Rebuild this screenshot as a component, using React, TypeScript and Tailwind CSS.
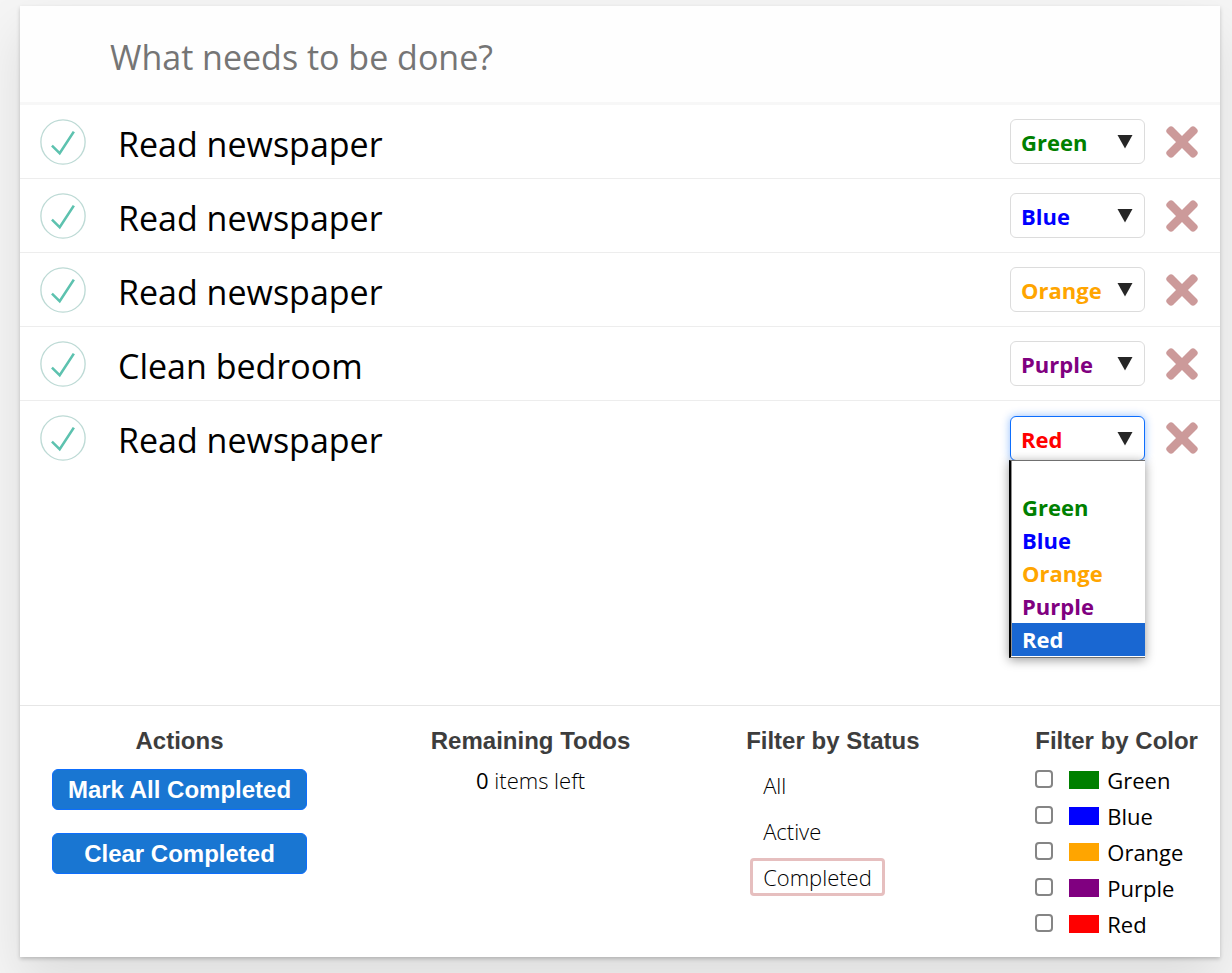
import { useState } from "react";
import { FaTimes } from "react-icons/fa";

type Color = "Green" | "Blue" | "Orange" | "Purple" | "Red";
type Todo = { id: number; text: string; color: Color };

const colors: Color[] = ["Green", "Blue", "Orange", "Purple", "Red"];

const textColor: Record<Color, string> = {
  Green: "text-[#008000]",
  Blue: "text-[#0000ff]",
  Orange: "text-[#ffa500]",
  Purple: "text-[#800080]",
  Red: "text-[#ff0000]",
};

const swatchColor: Record<Color, string> = {
  Green: "bg-[#008000]",
  Blue: "bg-[#0000ff]",
  Orange: "bg-[#ffa500]",
  Purple: "bg-[#800080]",
  Red: "bg-[#ff0000]",
};

const initialTodos: Todo[] = [
  { id: 1, text: "Read newspaper", color: "Green" },
  { id: 2, text: "Read newspaper", color: "Blue" },
  { id: 3, text: "Read newspaper", color: "Orange" },
  { id: 4, text: "Clean bedroom", color: "Purple" },
  { id: 5, text: "Read newspaper", color: "Red" },
];

function CheckMark() {
  return (
    <svg className="size-[46px]" viewBox="-2 -2 104 104" aria-hidden="true">
      <circle cx="50" cy="50" r="50" fill="none" stroke="#bddad5" strokeWidth="3" />
      <path fill="#5dc2af" d="M72 25L42 71 27 56l-4 4 20 20 34-52z" />
    </svg>
  );
}

function ColorSelect({ value, open, onChange }: { value: Color; open: boolean; onChange: (c: Color) => void }) {
  return (
    <div className="relative w-[135px]">
      <select
        aria-label="Color"
        value={value}
        onChange={(e) => onChange(e.target.value as Color)}
        className={`block h-[45px] w-full appearance-none rounded-[6px] border bg-white pt-0.5 pl-2.5 text-[22px] font-bold outline-none ${textColor[value]} ${
          open ? "border-[#0d6efd] shadow-[0_0_8px_rgba(13,110,253,0.45)]" : "border-[#dcdcdc]"
        }`}
      >
        {colors.map((c) => (
          <option key={c} value={c}>{c}</option>
        ))}
      </select>
      <svg className="pointer-events-none absolute top-[15px] right-3 h-[15px] w-4" viewBox="0 0 16 15" aria-hidden="true">
        <path d="M0.5 1h15L8 14.5z" fill="#262626" />
      </svg>
      {open && (
        <ul className="absolute top-full -left-px z-10 -mt-px w-[136px] border-y border-l-2 border-y-[#707070] border-l-black bg-white pb-px text-[22px] leading-[33px] font-bold shadow-[0_2px_10px_rgba(0,0,0,0.4)]">
          <li className="h-[30px] border-l border-[#909090]" />
          {colors.map((c) => (
            <li key={c} className={`border-l border-[#909090] pl-2.5 ${c === value ? "bg-[#1967d2] text-white" : textColor[c]}`}>
              {c}
            </li>
          ))}
        </ul>
      )}
    </div>
  );
}

export default function App() {
  const [todos, setTodos] = useState(initialTodos);
  const [status, setStatus] = useState("Completed");
  const heading = "text-[24px] leading-[30px] font-bold text-[#3d3d3d] font-['Liberation_Sans',Arial,sans-serif]";
  const action =
    "h-[41px] w-full rounded-[6px] border border-[#0d6efd] bg-[#1976d2] px-3.5 text-[24px] leading-[30px] font-bold text-white font-['Liberation_Sans',Arial,sans-serif]";

  return (
    <div className="min-h-screen bg-[#f5f5f5] px-3 pt-1.5 pb-4 pl-5 font-['Open_Sans','Segoe_UI',sans-serif] text-black">
      <main className="bg-white shadow-[0_2px_4px_rgba(0,0,0,0.2),0_25px_50px_rgba(0,0,0,0.1)]">
        <header>
          <input
            type="text"
            aria-label="New todo"
            placeholder="What needs to be done?"
            className="block h-[99px] w-full border-b-3 border-[#f7f7f7] bg-[#fefefe] pt-1.5 pr-4 pl-[90px] text-[34px] outline-none placeholder:text-[#757575]"
          />
        </header>
        <ul className="min-h-[600px]">
          {todos.map((todo, i) => (
            <li
              key={todo.id}
              className="flex h-[74px] items-center border-b border-[#ededed] pr-[22px] pl-5 last:border-b-0"
            >
              <button type="button" aria-label="Toggle todo">
                <CheckMark />
              </button>
              <span className="ml-8 flex-1 pt-1 text-[34px] leading-[48px]">{todo.text}</span>
              <ColorSelect
                value={todo.color}
                open={i === 4}
                onChange={(color) => setTodos(todos.map((t) => (t.id === todo.id ? { ...t, color } : t)))}
              />
              <button
                type="button"
                aria-label="Delete todo"
                className="ml-[21px] flex w-8 justify-center text-[#cc9a9a]"
                onClick={() => setTodos(todos.filter((t) => t.id !== todo.id))}
              >
                <FaTimes className="size-[46px] shrink-0" />
              </button>
            </li>
          ))}
        </ul>
        <footer className="flex justify-between border-t border-[#e6e6e6] pt-5 pr-[22px] pb-[15px] pl-8">
          <section className="mr-2 w-[255px] text-center">
            <h5 className={heading}>Actions</h5>
            <div className="mt-[13px] flex flex-col gap-[23px]">
              <button type="button" className={action}>Mark All Completed</button>
              <button type="button" className={action}>Clear Completed</button>
            </div>
          </section>
          <section className="text-center">
            <h5 className={heading}>Remaining Todos</h5>
            <p className="mt-2 text-[22px] leading-[33px] font-light">
              <strong className="font-medium">0</strong> items left
            </p>
          </section>
          <section>
            <h5 className={heading}>Filter by Status</h5>
            <ul className="mt-2.5 flex flex-col items-start gap-2 pl-1 text-[22px] leading-[32px] font-light">
              {["All", "Active", "Completed"].map((s) => (
                <li key={s}>
                  <button
                    type="button"
                    onClick={() => setStatus(s)}
                    className={`rounded-[4px] border-3 px-2.5 ${s === status ? "border-[#e6bfbf]" : "border-transparent"}`}
                  >
                    {s}
                  </button>
                </li>
              ))}
            </ul>
          </section>
          <section>
            <h5 className={heading}>Filter by Color</h5>
            <ul className="mt-1.5 text-[22px] leading-[36px]">
              {colors.map((c) => (
                <li key={c}>
                  <label className="flex items-center">
                    <input type="checkbox" className="mr-4 mb-0.5 size-[18px] appearance-none rounded-[4px] border-2 border-[#858585] bg-white checked:bg-[#1976d2]" />
                    <span className={`mr-2 h-[18px] w-[30px] ${swatchColor[c]}`} />
                    {c}
                  </label>
                </li>
              ))}
            </ul>
          </section>
        </footer>
      </main>
    </div>
  );
}
